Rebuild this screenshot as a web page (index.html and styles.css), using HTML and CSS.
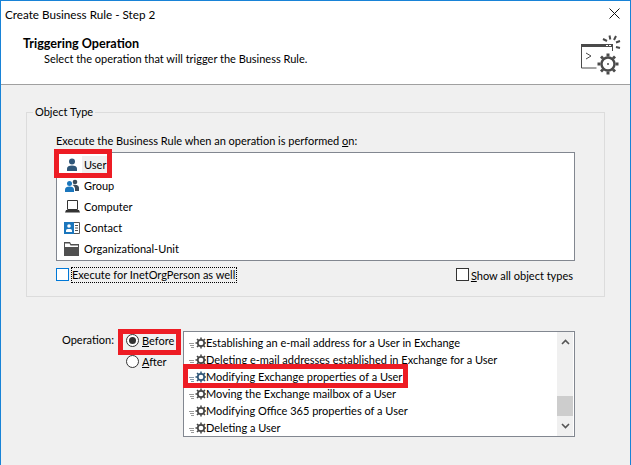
FILE: index.html
```html
<!DOCTYPE html>
<html lang="en">
<head>
<meta charset="utf-8">
<title>Create Business Rule - Step 2</title>
<link rel="stylesheet" href="styles.css">
</head>
<body>
<svg class="defs" width="0" height="0">
  <defs>
    <g id="gear">
      <path d="M0 7.500h5M1 9.500h4M2 11.500h3" stroke="#999"/>
      <circle cx="12" cy="7" r="3.200" fill="#fff" stroke="#444" stroke-width="1.700"/>
      <path d="M12 1.500v2M12 10.500v2M6.500 7h2M15.500 7h2M8 3l1.500 1.500M16 3l-1.500 1.500M8 11l1.500-1.500M16 11l-1.500-1.500" stroke="#444" stroke-width="1.500"/>
    </g>
    <g id="gear-blue">
      <path d="M0 7.500h5M1 9.500h4M2 11.500h3" stroke="#89a"/>
      <circle cx="12" cy="7" r="3.200" fill="#fff" stroke="#2f5678" stroke-width="1.700"/>
      <path d="M12 1.500v2M12 10.500v2M6.500 7h2M15.500 7h2M8 3l1.500 1.500M16 3l-1.500 1.500M8 11l1.500-1.500M16 11l-1.500-1.500" stroke="#2f5678" stroke-width="1.500"/>
    </g>
  </defs>
</svg>
<div class="window">
  <div class="titlebar">
    <span class="title">Create Business Rule - Step 2</span>
    <svg class="close" width="11" height="11" viewBox="0 0 11 11"><path d="M.5.5l10 10M10.500.5l-10 10" stroke="#111" fill="none"/></svg>
  </div>
  <header class="banner">
    <div>
      <div class="banner-title">Triggering Operation</div>
      <div class="banner-sub">Select the operation that will trigger the Business Rule.</div>
    </div>
    <svg class="banner-icon" width="40" height="44" viewBox="0 0 40 44">
      <path d="M0 11h32v3H0z" fill="#4a4a4a"/>
      <path d="M.5 13v22h15M31.500 13v5" stroke="#4a4a4a" fill="none"/>
      <path d="M25 12h2v1h-2zM28 12h2v1h-2z" fill="#fff"/>
      <path d="M5 20l5 3-5 3" stroke="#4a4a4a" fill="none"/>
      <path d="M22 6l4 2M28.500 2.500l.8 4M35 3l-2 4M39 8l-4 1.500M39 15l-4-1" stroke="#4a4a4a" stroke-width="2" fill="none"/>
      <circle cx="27" cy="31" r="6.500" fill="#fff" stroke="#4a4a4a" stroke-width="2.400"/>
      <circle cx="27" cy="31" r="1" fill="#4a4a4a"/>
      <path d="M25.500 20.500h3v3h-3zM25.500 38.500h3v3h-3zM16.500 29.500h3v3h-3zM34.500 29.500h3v3h-3zM19 24.500l2-2 2 2-2 2zM31 24.500l2-2 2 2-2 2zM19 37.500l2-2 2 2-2 2zM31 37.500l2-2 2 2-2 2z" fill="#4a4a4a"/>
    </svg>
  </header>
  <main class="content">
    <fieldset class="group">
      <legend class="legend">Object Type</legend>
      <p class="prompt">Execute the Business Rule when an operation is performed <u>o</u>n:</p>
      <ul class="types">
        <li class="type type-marked">
          <svg class="type-icon" width="16" height="16" viewBox="0 0 16 16"><circle cx="8" cy="4.500" r="3" fill="#2f5678"/><path d="M3 14v-2.500C3 9.500 5 8.500 8 8.500s5 1 5 3V14z" fill="#2f5678"/></svg>
          <span class="type-name type-name-selected">User</span>
        </li>
        <li class="type">
          <svg class="type-icon" width="16" height="16" viewBox="0 0 16 16"><circle cx="11" cy="4" r="2.300" fill="#3b4a58"/><path d="M8.500 7c2-.500 6.500-.500 6.500 3v3h-4v-2.500c0-1-.800-2.500-2.500-3.500z" fill="#3b4a58"/><circle cx="5.500" cy="5.500" r="2.500" fill="#1b76bc"/><path d="M1 14v-2.500c0-2 2-3 4.500-3s4.500 1 4.500 3V14z" fill="#1b76bc"/></svg>
          <span class="type-name">Group</span>
        </li>
        <li class="type">
          <svg class="type-icon" width="16" height="16" viewBox="0 0 16 16"><path d="M3.500 1.500h10v9h-10z" fill="none" stroke="#333"/><path d="M2 11h13l1 2.500H1z" fill="#333"/></svg>
          <span class="type-name">Computer</span>
        </li>
        <li class="type">
          <svg class="type-icon" width="16" height="16" viewBox="0 0 16 16"><path d="M.5 2.500h15v11H.5z" fill="#fff" stroke="#555"/><path d="M0 2h10v12H0z" fill="#1b76bc"/><circle cx="5" cy="6" r="1.800" fill="#fff"/><path d="M2 12v-1.500C2 9.300 3.300 9 5 9s3 .3 3 1.500V12z" fill="#fff"/><path d="M11 5.500h3M11 8h3M11 10.500h3" stroke="#555"/></svg>
          <span class="type-name">Contact</span>
        </li>
        <li class="type">
          <svg class="type-icon" width="16" height="16" viewBox="0 0 16 16"><path d="M0 1h6l1 2h8v12H0z" fill="#505050"/><path d="M1 2.500h4.500l1 2H14V6H1z" fill="#fff"/></svg>
          <span class="type-name">Organizational-Unit</span>
        </li>
      </ul>
      <div class="options">
        <label class="check">
          <span class="box box-focus"></span>
          <span class="check-text check-text-focus">Execute for InetOrgPerson as well</span>
        </label>
        <label class="check">
          <span class="box"></span>
          <span class="check-text"><u>S</u>how all object types</span>
        </label>
      </div>
    </fieldset>
    <section class="operation">
      <span class="operation-label">Operation:</span>
      <div class="radios">
        <label class="radio radio-marked"><span class="dot dot-on"></span><span><u>B</u>efore</span></label>
        <label class="radio"><span class="dot"></span><span><u>A</u>fter</span></label>
      </div>
      <div class="ops">
        <ul class="ops-list">
          <li class="op"><svg class="op-icon" width="17" height="14" viewBox="0 0 17 14"><use href="#gear"/></svg>Establishing an e-mail address for a User in Exchange</li>
          <li class="op"><svg class="op-icon" width="17" height="14" viewBox="0 0 17 14"><use href="#gear"/></svg>Deleting e-mail addresses established in Exchange for a User</li>
          <li class="op op-marked"><svg class="op-icon" width="17" height="14" viewBox="0 0 17 14"><use href="#gear-blue"/></svg>Modifying Exchange properties of a User</li>
          <li class="op"><svg class="op-icon" width="17" height="14" viewBox="0 0 17 14"><use href="#gear"/></svg>Moving the Exchange mailbox of a User</li>
          <li class="op"><svg class="op-icon" width="17" height="14" viewBox="0 0 17 14"><use href="#gear"/></svg>Modifying Office 365 properties of a User</li>
          <li class="op"><svg class="op-icon" width="17" height="14" viewBox="0 0 17 14"><use href="#gear"/></svg>Deleting a User</li>
        </ul>
        <div class="scrollbar">
          <svg width="9" height="6" viewBox="0 0 9 6"><path d="M1 5l3.500-3.500L8 5" fill="none" stroke="#555" stroke-width="1.600"/></svg>
          <div class="track"><div class="thumb"></div></div>
          <svg width="9" height="6" viewBox="0 0 9 6"><path d="M1 1l3.500 3.500L8 1" fill="none" stroke="#555" stroke-width="1.600"/></svg>
        </div>
      </div>
    </section>
  </main>
</div>
</body>
</html>
```
FILE: styles.css
```css
*, *::before, *::after { box-sizing: border-box; }
html, body { margin: 0; padding: 0; }
body {
  width: 631px;
  height: 465px;
  overflow: hidden;
  font-family: Lato, "Open Sans", sans-serif;
  font-size: 11px;
  color: #000;
  background: #f0f0f0;
}
ul { list-style: none; margin: 0; padding: 0; }
.defs { position: absolute; height: 0; width: 0; }
.window {
  width: 631px;
  height: 465px;
  border: 1px solid #1883d7;
  border-bottom: 0;
  display: flex;
  flex-direction: column;
}
.titlebar {
  height: 24px;
  background: #fff;
  display: flex;
  justify-content: space-between;
  align-items: center;
  padding: 1px 10px 0 4px;
  flex: none;
}
.title { font-size: 11.700px; }
.close { display: block; }
.banner {
  height: 60px;
  flex: none;
  background: #fff;
  border-bottom: 1px solid #a0a0a0;
  display: flex;
  justify-content: space-between;
  padding: 11px 9px 0 22px;
}
.banner-title { font-size: 12.600px; font-weight: 700; line-height: 15px; }
.banner-sub { padding-left: 21px; line-height: 15px; }
.banner-icon { display: block; margin-top: -3px; }
.content { flex: 1; padding: 19px 25px 0 25px; background: #f0f0f0; }
.group {
  margin: 0;
  padding: 0 29px 0 29px;
  height: 193px;
  width: 579px;
  border: 1px solid #dcdcdc;
}
.legend { padding: 0 2px; margin-left: -23px; line-height: 16px; }
.prompt { margin: 13px 0 3px; line-height: 16px; }
.types {
  background: #fff;
  border: 1px solid #828790;
  height: 109px;
  padding-top: 1px;
}
.type {
  height: 21px;
  display: flex;
  align-items: center;
  padding-left: 7px;
  gap: 2px;
  position: relative;
}
.type-icon { display: block; flex: none; }
.type-name { padding: 0 2px; line-height: 17px; }
.type-name-selected { background: #f0f0f0; }
.type-marked::after {
  content: "";
  position: absolute;
  left: -3px;
  top: -5px;
  width: 58px;
  height: 29px;
  border: 5px solid #ed1c24;
}
.options {
  display: flex;
  justify-content: space-between;
  padding-top: 6px;
  padding-right: 2px;
}
.check { display: flex; align-items: center; gap: 2px; height: 16px; }
.box { width: 13px; height: 13px; margin-bottom: 1px; border: 1px solid #333; background: #fff; display: block; }
.box-focus { border-color: #0078d7; }
.check-text-focus { outline: 1px dotted #000; outline-offset: -1px; padding: 0 2px 0 1px; line-height: 16px; }
.operation { display: flex; margin-top: 34px; height: 106px; }
.operation-label { width: 64px; padding-left: 36px; white-space: nowrap; flex: none; line-height: 18px; }
.radios { width: 93px; padding-left: 36px; flex: none; margin-top: -1px; }
.radio { display: flex; align-items: center; gap: 3px; height: 21px; position: relative; }
.radio-marked::after {
  content: "";
  position: absolute;
  left: -8px;
  top: -1px;
  width: 63px;
  height: 26px;
  border: 5px solid #ed1c24;
}
.dot { width: 13px; height: 13px; border-radius: 50%; border: 1px solid #333; background: #fff; display: block; position: relative; }
.dot-on::before {
  content: "";
  position: absolute;
  left: 2px;
  top: 2px;
  width: 7px;
  height: 7px;
  border-radius: 50%;
  background: #333;
}
.ops {
  width: 392px;
  height: 106px;
  background: #fff;
  border: 1px solid #828790;
  display: flex;
  justify-content: space-between;
  padding-right: 1px;
}
.ops-list { flex: 1; padding-top: 2px; }
.op { height: 17px; line-height: 17px; display: flex; align-items: center; padding-left: 5px; white-space: nowrap; position: relative; }
.op-icon { display: block; flex: none; }
.op-marked::after {
  content: "";
  position: absolute;
  left: -1px;
  top: -4px;
  width: 225px;
  height: 24px;
  border: 5px solid #ed1c24;
}
.scrollbar {
  width: 16px;
  background: #f0f0f0;
  display: flex;
  flex-direction: column;
  align-items: center;
  justify-content: space-between;
  padding: 7px 0;
}
.track { flex: 1; width: 16px; position: relative; }
.thumb { position: absolute; left: 0; bottom: 7px; width: 16px; height: 20px; background: #cdcdcd; }
```
